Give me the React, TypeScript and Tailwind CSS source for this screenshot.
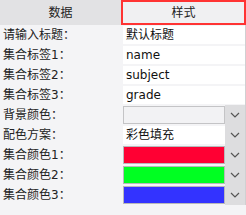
import React from 'react';

const font = { fontFamily: '"DejaVu Sans", "Noto Sans CJK SC", sans-serif' };

const Chevron = () => (
  <svg width="10" height="6" viewBox="0 0 10 6" className="text-[#555]">
    <path d="M1 1l4 4 4-4" fill="none" stroke="currentColor" strokeWidth="1.2" />
  </svg>
);

const TextRow = ({ label, value }: { label: string; value: string }) => (
  <div className="flex h-5 items-center">
    <div className="w-[123px] pl-[3px] text-[12px] text-[#222]">{label}</div>
    <div className="flex h-[18px] flex-1 items-center bg-white pl-[3px] text-[12px] text-[#111]">{value}</div>
  </div>
);

const SelectRow = ({ label, children }: { label: string; children: React.ReactNode }) => (
  <div className="flex h-5 items-center">
    <div className="w-[123px] pl-[3px] text-[12px] text-[#222]">{label}</div>
    <div className="flex h-5 flex-1 items-center">
      <div className="flex h-[18px] w-[102px] items-center">{children}</div>
      <div className="flex h-5 flex-1 items-center justify-center bg-[#dddddf]">
        <Chevron />
      </div>
    </div>
  </div>
);

const colors = [
  { label: '集合颜色1：', color: 'bg-[#ff0033]' },
  { label: '集合颜色2：', color: 'bg-[#00ff22]' },
  { label: '集合颜色3：', color: 'bg-[#3333ff]' },
];

export default function App() {
  return (
    <div className="h-[215px] w-[246px] overflow-hidden bg-[#f4f4f6]" style={font}>
      {/* Tabs */}
      <div className="flex h-[25px]">
        <div className="flex w-[121px] items-center justify-center bg-[#e2e2e4] text-[12px] text-[#222]">数据</div>
        <div className="flex flex-1 items-center justify-center border-2 border-[#ff3333] bg-[#f0f0f2] text-[12px] text-[#222]">
          样式
        </div>
      </div>

      {/* Form rows */}
      <div className="flex flex-col border-r border-[#d0d0d2]">
        <TextRow label="请输入标题：" value="默认标题" />
        <TextRow label="集合标签1：" value="name" />
        <TextRow label="集合标签2：" value="subject" />
        <TextRow label="集合标签3：" value="grade" />
        <SelectRow label="背景颜色：">
          <div className="h-full w-full border border-[#c4c4c6] bg-[#f2f2f4]" />
        </SelectRow>
        <SelectRow label="配色方案：">
          <div className="flex h-full w-full items-center bg-white pl-[3px] text-[12px] text-[#111]">彩色填充</div>
        </SelectRow>
        {colors.map(c => (
          <SelectRow key={c.label} label={c.label}>
            <div className={`h-full w-full border border-[#b8b8ba] ${c.color}`} />
          </SelectRow>
        ))}
      </div>
    </div>
  );
}
